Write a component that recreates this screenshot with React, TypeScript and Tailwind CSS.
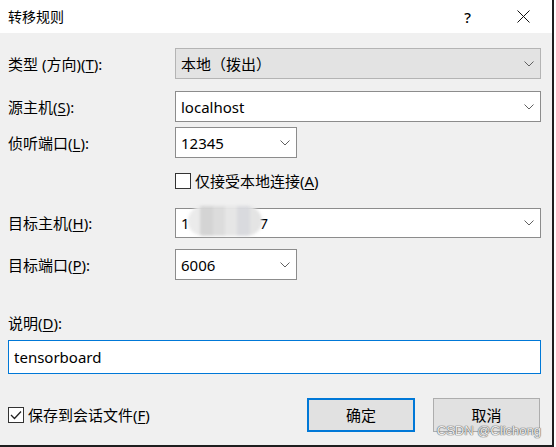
import React from "react";

const FONT = "font-['Noto_Sans','Noto_Sans_CJK_SC',sans-serif]";

function Chevron() {
  return (
    <svg width="10" height="6" viewBox="0 0 10 6" className="shrink-0">
      <path d="M0.5 0.5 L5 5 L9.5 0.5" fill="none" stroke="#606060" strokeWidth="1" />
    </svg>
  );
}

function Label({ text, k, tail = "):" }: { text: string; k: string; tail?: string }) {
  return (
    <div className="w-[167px] shrink-0 text-[15px] leading-[20px] text-black">
      {text}(<u className="underline-offset-2">{k}</u>
      {tail}
    </div>
  );
}

function Combo({
  value,
  width,
  gray,
  children,
}: {
  value?: string;
  width?: string;
  gray?: boolean;
  children?: React.ReactNode;
}) {
  return (
    <div
      className={`relative flex h-full items-center justify-between border pl-[5px] pr-[6px] text-[15px] leading-[20px] text-black ${
        gray ? "border-[#b4b4b4] bg-[#e3e3e3]" : "border-[#8c8c8c] bg-white"
      } ${width ?? "flex-1"}`}
    >
      <span className="flex items-center">{children ?? value}</span>
      <Chevron />
    </div>
  );
}

function Check({ checked }: { checked?: boolean }) {
  return (
    <div className="flex h-[16px] w-[16px] shrink-0 items-center justify-center border border-[#333] bg-white">
      {checked && (
        <svg width="12" height="10" viewBox="0 0 12 10">
          <path d="M1 5 L4.5 8.5 L11 1.5" fill="none" stroke="#222" strokeWidth="1.3" />
        </svg>
      )}
    </div>
  );
}

export default function App() {
  return (
    <div className={`h-[447px] w-[556px] bg-white ${FONT}`}>
      <div className="flex h-[447px] w-[554px] flex-col border-r-2 border-b-2 border-[#1e1e1e] bg-[#f0f0f0]">
        {/* Title bar */}
        <div className="flex h-[33px] shrink-0 items-center bg-white pl-2">
          <span className="text-[14px] leading-[20px] text-black">转移规则</span>
          <span className="ml-auto mr-[46px] text-[15px] font-medium leading-[20px] text-black">?</span>
          <svg width="13" height="13" viewBox="0 0 13 13" className="mr-[22px]">
            <path d="M0.5 0.5 L12.5 12.5 M12.5 0.5 L0.5 12.5" stroke="#111" strokeWidth="1" />
          </svg>
        </div>

        <div className="flex flex-col pl-2 pr-[11px]">
          <div className="mt-[15px] flex h-[31px] items-center">
            <Label text="类型 (方向)" k="T" />
            <Combo gray value="本地（拨出）" />
          </div>

          <div className="mt-[12px] flex h-[31px] items-center">
            <Label text="源主机" k="S" />
            <Combo value="localhost" />
          </div>

          <div className="mt-[5px] flex h-[31px] items-center">
            <Label text="侦听端口" k="L" />
            <Combo value="12345" width="w-[122px]" />
          </div>

          <div className="mt-[15px] flex h-[16px] items-center pl-[167px]">
            <Check />
            <span className="ml-[4px] text-[15px] leading-[20px] text-black">
              仅接受本地连接(<u className="underline-offset-2">A</u>)
            </span>
          </div>

          <div className="mt-[19px] flex h-[30px] items-center">
            <Label text="目标主机" k="H" />
            <Combo>
              <span>1</span>
              <span className="relative h-[20px] w-[70px]">
                <span className="absolute -top-[7px] -left-[2px] flex h-[30px] w-[74px] overflow-hidden rounded-full blur-[1.5px]">
                  <span className="w-[12px] bg-[#ebebeb]" />
                  <span className="w-[13px] bg-[#d4d4d4]" />
                  <span className="w-[12px] bg-[#dcdcdc]" />
                  <span className="w-[12px] bg-[#e6e6e6]" />
                  <span className="w-[13px] bg-[#d9dade]" />
                  <span className="w-[12px] bg-[#e4e4e4]" />
                </span>
              </span>
              <span>7</span>
            </Combo>
          </div>

          <div className="mt-[11px] flex h-[31px] items-center">
            <Label text="目标端口" k="P" />
            <Combo value="6006" width="w-[122px]" />
          </div>

          <div className="mt-[33px] h-[20px]">
            <Label text="说明" k="D" />
          </div>

          <div className="mt-[7px] flex h-[34px] items-center border border-[#0078d7] bg-white pl-[5px] text-[15px] leading-[20px] text-black">
            tensorboard
          </div>

          <div className="relative mt-[24px] flex h-[34px] items-center">
            <Check checked />
            <span className="ml-[4px] text-[15px] leading-[20px] text-black">
              保存到会话文件(<u className="underline-offset-2">F</u>)
            </span>
            <button className="ml-auto flex h-[34px] w-[108px] items-center justify-center border-2 border-[#0078d7] bg-[#e1e1e1] text-[15px] leading-[20px] text-black">
              确定
            </button>
            <button className="ml-[18px] mr-px flex h-[34px] w-[107px] items-center justify-center border border-[#adadad] bg-[#e1e1e1] text-[15px] leading-[20px] text-black">
              取消
            </button>
            <span className="absolute right-0 top-[25px] font-['Liberation_Sans',sans-serif] text-[13px] leading-[16px] text-[#eeeeee] [text-shadow:0_0_1px_#6a6a6a,0_0_1px_#6a6a6a,0_0_1px_#6a6a6a]">
              CSDN @Clichong
            </span>
          </div>
        </div>
      </div>
    </div>
  );
}
